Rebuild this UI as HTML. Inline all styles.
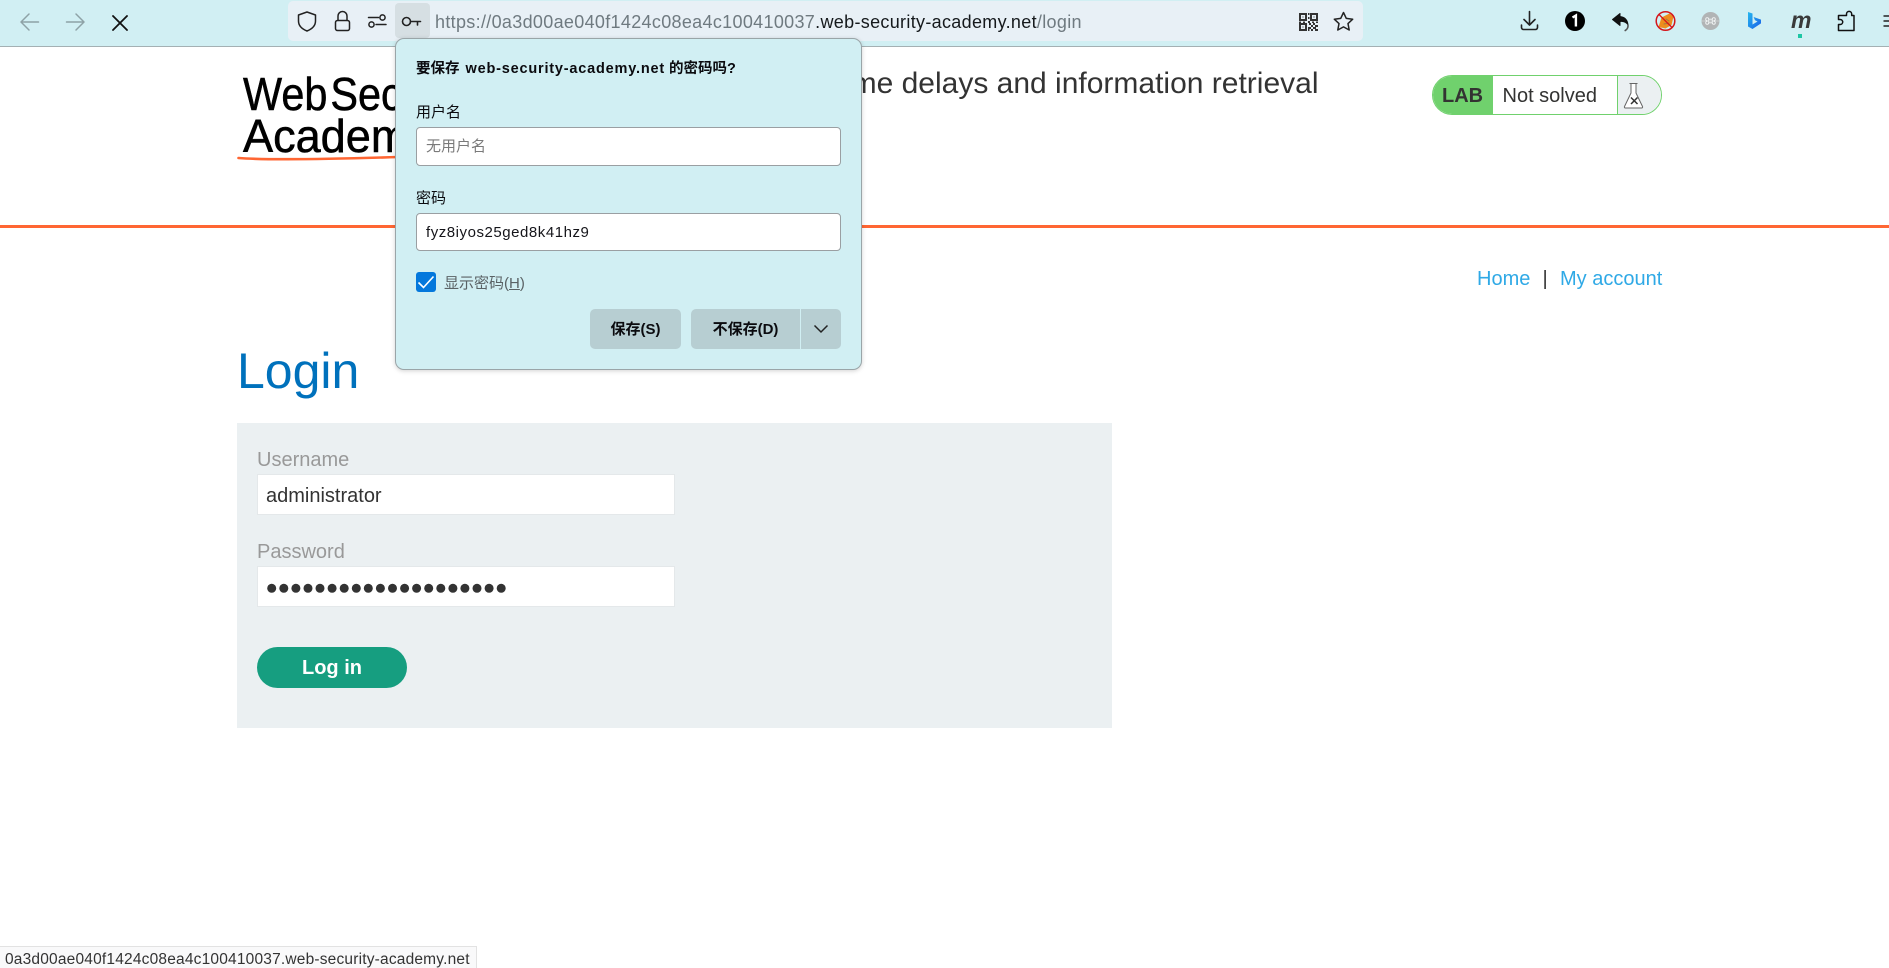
<!DOCTYPE html>
<html lang="zh">
<head>
<meta charset="utf-8">
<title>Login</title>
<style>
html,body{margin:0;padding:0;width:1889px;height:968px;overflow:hidden;background:#fff;}
body{font-family:"Liberation Sans","Noto Sans CJK SC",sans-serif;color:#333;position:relative;}
.a{position:absolute;white-space:nowrap;}
.t20{font-size:20px;line-height:24px;}
svg{position:absolute;overflow:visible;}
.cjk{font-family:"Liberation Sans","Noto Sans CJK SC",sans-serif;}
.logo{font-size:46px;line-height:50px;color:#000;transform:scaleX(.9);transform-origin:0 0;word-spacing:-9.4px;-webkit-text-stroke:.55px #000;}
</style>
</head>
<body>
<!-- toolbar -->
<div class="a" style="left:0;top:0;width:1889px;height:46px;background:#d1eff3;border-bottom:1px solid #a4b0b3;"></div>
<div class="a" style="left:288px;top:1px;width:1075px;height:40px;background:#e8f0f6;border-radius:5px;"></div>
<div class="a" style="left:395px;top:3px;width:35px;height:35px;background:#d6dfe3;border-radius:4px;"></div>

<svg style="left:0;top:0" width="1889" height="46" fill="none" stroke-linecap="round" stroke-linejoin="round">
  <!-- back / forward / stop -->
  <path d="M38.5 22H21M29 14l-8 8 8 8" stroke="#8ea2a6" stroke-width="1.5"/>
  <path d="M66.5 22H84M76 14l8 8-8 8" stroke="#8ea2a6" stroke-width="1.5"/>
  <path d="M113 16l14 14M127 16l-14 14" stroke="#111" stroke-width="1.8"/>
  <!-- shield -->
  <path d="M307 12l8.5 3v6c0 5-3.5 8-8.5 10-5-2-8.5-5-8.5-10v-6z" stroke="#222" stroke-width="1.5"/>
  <!-- lock -->
  <rect x="335.5" y="20.5" width="14" height="10" rx="2" stroke="#222" stroke-width="1.5"/>
  <path d="M338 20v-4a4.5 4.5 0 0 1 9 0v4" stroke="#222" stroke-width="1.5"/>
  <!-- sliders -->
  <path d="M368.5 17.5h10M376 24.5h10" stroke="#222" stroke-width="1.5"/>
  <circle cx="382.5" cy="17.5" r="2.6" stroke="#222" stroke-width="1.5"/>
  <circle cx="371.5" cy="24.5" r="2.6" stroke="#222" stroke-width="1.5"/>
  <!-- key -->
  <circle cx="406.5" cy="21.5" r="4" stroke="#222" stroke-width="1.6"/>
  <path d="M410.5 21.5h10M417.5 21.5v3.5" stroke="#222" stroke-width="1.6"/>
  <!-- star -->
  <path d="M1343.5 12.5l2.8 5.9 6.4.8-4.7 4.4 1.2 6.4-5.7-3.1-5.7 3.1 1.2-6.4-4.7-4.4 6.4-.8z" stroke="#222" stroke-width="1.5"/>
  <!-- download -->
  <path d="M1529.5 11.5v13M1524 19.5l5.500 5.500 5.500-5.500M1521.500 25v2.500a2 2 0 0 0 2 2h12a2 2 0 0 0 2-2V25" stroke="#222" stroke-width="1.6"/>
  <!-- black circle 1 -->
  <circle cx="1575" cy="21" r="10" fill="#000"/>
  <path d="M1572.5 17.5l3.4-2v11" stroke="#fff" stroke-width="2.4" stroke-linecap="butt" stroke-linejoin="miter"/>
  <!-- reply arrow -->
  <path d="M1620 13.500l-7.500 6 7.500 6v-4c4-.5 6.500 1 8 3.500-.5-5-3.500-8-8-8.500z" fill="#111" stroke="#111" stroke-width="1"/>
  <path d="M1628 25c.2 2.500-1 4.500-2.800 5.500" stroke="#555" stroke-width="1.6"/>
  <!-- orange blocked icon -->
  <path d="M1658.500 27l3-9.500 8-4 4 3-2 8.500-6 3.500z" fill="#ee8c1e"/>
  <path d="M1664 24l5-1M1666 19l3 2" stroke="#9c7a44" stroke-width=".9"/>
  <circle cx="1665.500" cy="21" r="9.300" stroke="#d4161c" stroke-width="1.500"/>
  <path d="M1659 14.500l13 13" stroke="#d4161c" stroke-width="1.300"/>
  <!-- grey circle -->
  <circle cx="1710.500" cy="21" r="9" fill="#b1b4b5"/>
  <path d="M1702 21h17" stroke="#c9cccd" stroke-width="1"/>
  <path d="M1708.700 19.200h3.600v3.600h-3.600zM1708.700 19.200a1.500 1.500 0 1 0-1.500 1.500M1712.300 19.200a1.500 1.500 0 1 1 1.500 1.500M1708.700 22.800a1.500 1.500 0 1 1-1.500-1.500M1712.300 22.800a1.500 1.500 0 1 0 1.500-1.500" stroke="#f2f4f4" stroke-width=".9"/>
  <!-- bing -->
  <defs><linearGradient id="bg" x1="0" y1="0" x2="1" y2="1"><stop offset="0" stop-color="#26b8ee"/><stop offset="1" stop-color="#1a5fe8"/></linearGradient></defs>
  <path d="M1748 12l4.500 1.500v11l5-3-2.500-1.200-1.400-3.300 7.400 2.600v3.800l-8.500 5.600-4.500-2.500z" fill="url(#bg)"/>
  <!-- puzzle -->
  <path d="M1843 15h3.500v-1.500a2.600 2.600 0 0 1 5.200 0V15h2.300v15h-15.500v-6h1.700a2.500 2.500 0 0 0 0-5h-1.700v-4h4.500" stroke="#111" stroke-width="1.500" transform="translate(0,.5)"/>
  <!-- hamburger -->
  <path d="M1883.500 16h6M1883.500 21h6M1883.500 26h6" stroke="#222" stroke-width="1.500" stroke-linecap="butt"/>
  <!-- qr -->
  <g fill="#333" stroke="none">
    <path d="M1299 13h8v8h-8zM1301 15v4h4v-4zM1310 13h8v8h-8zM1312 15v4h4v-4zM1299 23h8v8h-8zM1301 25v4h4v-4z" fill-rule="evenodd"/>
    <path d="M1302.500 16.500h1v1h-1zM1313.500 16.500h1v1h-1zM1302.500 26.500h1v1h-1zM1308 13h1.500v2H1308zM1308 17h1.500v2H1308zM1299 21.500h2v1.500h-2zM1303 21.500h2v1.500h-2zM1308 21h2v2h-2zM1312 21.500h2v1.500h-2zM1316 21.500h2v1.500h-2zM1309 23h2v2h-2zM1313 23h2v2h-2zM1316 25h2v2h-2zM1311 25h2v2h-2zM1315 25h1v2h-1zM1308 27h3v2h-3zM1313 27h3v2h-3zM1311 29h2v2h-2zM1315 29h3v2h-3zM1308 29h1.500v2H1308z"/>
  </g>
</svg>
<div class="a" style="left:1791px;top:8px;font:italic bold 23px/24px 'Liberation Sans',sans-serif;color:#3a3a3a;letter-spacing:-.5px;">m</div>
<div class="a" style="left:1798px;top:34px;width:4px;height:4px;background:#1ec6a4;"></div>

<div class="a" style="left:435px;top:11px;font-size:18px;line-height:22px;color:#6f7a80;letter-spacing:.32px;">https://0a3d00ae040f1424c08ea4c100410037<span style="color:#15191c">.web-security-academy.net</span>/login</div>

<!-- page header -->
<div class="a logo" style="left:243px;top:69px;">Web Security</div>
<div class="a logo" style="left:243px;top:110.500px;transform:scaleX(.98);">Academy</div>
<svg style="left:0;top:0" width="500" height="170" fill="none"><path d="M238.500 158c30 2.200 90 1.200 160-1" stroke="#ff6633" stroke-width="2.600" stroke-linecap="round"/></svg>

<div class="a" style="right:570.500px;top:65.800px;font-size:30px;line-height:36px;color:#333;">Blind SQL injection with time delays and information retrieval</div>

<!-- lab badge -->
<div class="a" style="left:1432px;top:75px;width:228px;height:38px;border:1px solid #70d16d;border-radius:20px;background:#fff;overflow:hidden;">
  <div class="a" style="left:0;top:0;width:60px;height:38px;background:#70d16d;"></div>
  <div class="a" style="left:184px;top:0;width:44px;height:38px;background:#ebf0f2;border-left:1px solid #70d16d;"></div>
</div>
<div class="a t20" style="left:1442px;top:84px;font-weight:bold;color:#333332;">LAB</div>
<div class="a t20" style="left:1502.500px;top:84px;color:#333332;">Not solved</div>
<svg style="left:1620px;top:78px" width="50" height="36" fill="none" stroke-linejoin="round">
  <path d="M9.500 5.500h8M11 6v9L4.500 28.500a1 1 0 0 0 1 1.500h16a1 1 0 0 0 1-1.500L16 15V6" stroke="#666" stroke-width="1" fill="#fff"/>
  <path d="M11 19.500l6.500 6.500M17.500 19.500L11 26" stroke="#333" stroke-width="1.500"/>
</svg>

<div class="a" style="left:0;top:225px;width:1889px;height:3px;background:#ff6633;"></div>

<!-- nav -->
<div class="a t20" style="left:1477px;top:267px;color:#2fa9e6;">Home</div>
<div class="a t20" style="left:1542.500px;top:267px;color:#333;">|</div>
<div class="a t20" style="left:1560px;top:267px;color:#2fa9e6;">My account</div>

<div class="a" style="left:237px;top:342px;font-size:50px;line-height:58px;color:#0071bc;">Login</div>

<!-- panel -->
<div class="a" style="left:237px;top:423px;width:875px;height:305px;background:#ebf0f2;"></div>
<div class="a t20" style="left:257px;top:448px;color:#999;">Username</div>
<div class="a" style="left:257px;top:474px;width:416px;height:39px;background:#fff;border:1px solid #e4e8ea;"></div>
<div class="a t20" style="left:266px;top:484px;color:#333;">administrator</div>
<div class="a t20" style="left:257px;top:540px;color:#999;">Password</div>
<div class="a" style="left:257px;top:566px;width:416px;height:39px;background:#fff;border:1px solid #e4e8ea;"></div>
<svg style="left:0;top:0" width="600" height="600" fill="#333"><g>
<circle cx="271.700" cy="588.300" r="4.500"/><circle cx="283.800" cy="588.300" r="4.500"/><circle cx="295.900" cy="588.300" r="4.500"/><circle cx="308" cy="588.300" r="4.500"/><circle cx="320" cy="588.300" r="4.500"/><circle cx="332.100" cy="588.300" r="4.500"/><circle cx="344.200" cy="588.300" r="4.500"/><circle cx="356.300" cy="588.300" r="4.500"/><circle cx="368.300" cy="588.300" r="4.500"/><circle cx="380.400" cy="588.300" r="4.500"/><circle cx="392.500" cy="588.300" r="4.500"/><circle cx="404.600" cy="588.300" r="4.500"/><circle cx="416.600" cy="588.300" r="4.500"/><circle cx="428.700" cy="588.300" r="4.500"/><circle cx="440.800" cy="588.300" r="4.500"/><circle cx="452.900" cy="588.300" r="4.500"/><circle cx="464.900" cy="588.300" r="4.500"/><circle cx="477" cy="588.300" r="4.500"/><circle cx="489.100" cy="588.300" r="4.500"/><circle cx="501.200" cy="588.300" r="4.500"/>
</g></svg>
<div class="a" style="left:257px;top:647px;width:150px;height:41px;background:#169e80;border-radius:21px;"></div>
<div class="a t20" style="left:257px;top:655.500px;width:150px;text-align:center;color:#fff;font-weight:bold;">Log in</div>

<!-- dialog -->
<div class="a" style="left:395px;top:38px;width:465px;height:330px;background:#d1eff3;border:1px solid #9aa5a8;border-radius:9px;box-shadow:0 1px 5px rgba(0,0,0,.18);"></div>
<div class="a cjk" style="left:416px;top:58.500px;font-size:14.500px;line-height:20px;font-weight:bold;color:#0b0b0f;">要保存 <span style="letter-spacing:.8px;margin-left:2px">web-security-academy.net</span> 的密码吗?</div>
<div class="a cjk" style="left:416px;top:103px;font-size:15px;line-height:20px;color:#0b0b0f;">用户名</div>
<div class="a" style="left:416px;top:127px;width:423px;height:37px;background:#fff;border:1px solid #9a9fa2;border-radius:4px;"></div>
<div class="a cjk" style="left:426px;top:137px;font-size:15px;line-height:20px;color:#7a7a7a;">无用户名</div>
<div class="a cjk" style="left:416px;top:189px;font-size:15px;line-height:20px;color:#0b0b0f;">密码</div>
<div class="a" style="left:416px;top:213px;width:423px;height:36px;background:#fff;border:1px solid #9a9fa2;border-radius:4px;"></div>
<div class="a" style="left:426px;top:223px;font-size:15px;line-height:20px;color:#15151a;letter-spacing:.54px;">fyz8iyos25ged8k41hz9</div>
<div class="a" style="left:416px;top:272px;width:20px;height:20px;background:#0478dc;border-radius:3px;"></div>
<svg style="left:416px;top:272px" width="20" height="20" fill="none"><path d="M2.500 10.500l5 5L17.500 4.500" stroke="#fff" stroke-width="1.600"/></svg>
<div class="a cjk" style="left:444px;top:273.500px;font-size:15px;line-height:20px;color:#5a6265;">显示密码(<span style="text-decoration:underline">H</span>)</div>
<div class="a" style="left:590px;top:309px;width:91px;height:40px;background:#b7ced2;border-radius:5px;"></div>
<div class="a cjk" style="left:590px;top:320px;width:91px;text-align:center;font-size:15px;line-height:20px;font-weight:bold;color:#0b0b0f;">保存(S)</div>
<div class="a" style="left:691px;top:309px;width:109px;height:40px;background:#b7ced2;border-radius:5px 0 0 5px;"></div>
<div class="a" style="left:801px;top:309px;width:40px;height:40px;background:#b7ced2;border-radius:0 5px 5px 0;"></div>
<div class="a cjk" style="left:691px;top:320px;width:109px;text-align:center;font-size:15px;line-height:20px;font-weight:bold;color:#0b0b0f;">不保存(D)</div>
<svg style="left:801px;top:309px" width="40" height="40" fill="none"><path d="M13.500 16.500l6.500 6.500 6.500-6.500" stroke="#222" stroke-width="1.500"/></svg>

<!-- status bar -->
<div class="a" style="left:0;top:946px;width:477px;height:22px;background:#f9f9fa;border-top:1px solid #e2e2e2;border-right:1px solid #e2e2e2;box-sizing:border-box;"></div>
<div class="a" style="left:5px;top:951px;font-size:15.500px;line-height:18px;color:#333;letter-spacing:.19px;">0a3d00ae040f1424c08ea4c100410037.web-security-academy.net</div>
</body>
</html>
